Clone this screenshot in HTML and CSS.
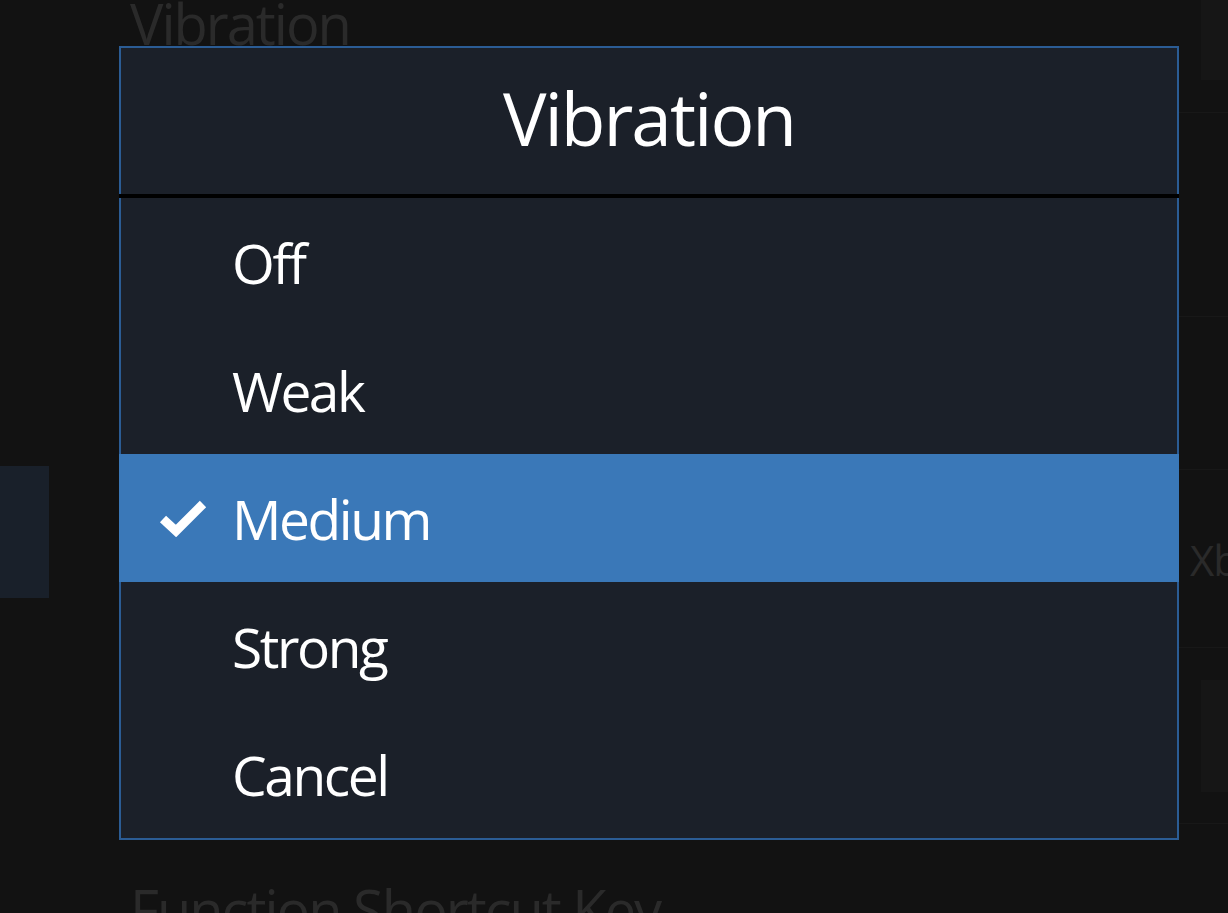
FILE: index.html
```html
<!DOCTYPE html>
<html lang="en">
<head>
<meta charset="utf-8">
<title>Vibration</title>
<link rel="stylesheet" href="styles.css">
</head>
<body>
<div class="page">
  <aside class="sidebar">
    <div class="side-item"></div>
  </aside>
  <main class="settings">
    <div class="row row-head">
      <h2 class="group-title">Vibration</h2>
      <div class="row-side"><div class="side-box side-box-top"></div></div>
    </div>
    <div class="row row-b"></div>
    <div class="row row-c"></div>
    <div class="row row-d">
      <div class="row-side row-side-text">Xbox</div>
    </div>
    <div class="row row-e">
      <div class="row-side"><div class="side-box side-box-mid"></div></div>
    </div>
    <h2 class="group-title group-title-next">Function Shortcut Key</h2>
  </main>
</div>

<div class="overlay">
  <div class="dialog" role="dialog" aria-label="Vibration">
    <div class="dialog-header">Vibration</div>
    <div class="dialog-rule"></div>
    <ul class="options">
      <li class="option"><span class="check"></span><span class="label">Off</span></li>
      <li class="option"><span class="check"></span><span class="label">Weak</span></li>
      <li class="option selected"><span class="check"><svg width="48" height="37" viewBox="0 0 48 37"><polyline points="4,19 17,31 44,4" fill="none" stroke="#ffffff" stroke-width="9" stroke-linejoin="miter" stroke-linecap="butt"/></svg></span><span class="label">Medium</span></li>
      <li class="option"><span class="check"></span><span class="label">Strong</span></li>
      <li class="option"><span class="check"></span><span class="label">Cancel</span></li>
    </ul>
  </div>
</div>
</body>
</html>
```

FILE: styles.css
```css
* { box-sizing: border-box; }

html, body {
  margin: 0;
  padding: 0;
  height: 100%;
}

body {
  background: #121212;
  font-family: "Open Sans", "Noto Sans", "DejaVu Sans", sans-serif;
  overflow: hidden;
  color: #ffffff;
}

/* ---------- dimmed background page ---------- */
.page {
  display: grid;
  grid-template-columns: 49px 1fr;
  height: 913px;
  overflow: hidden;
}

.sidebar {
  padding-top: 466px;
}

.side-item {
  height: 132px;
  background: #19202a;
}

.settings {
  display: flex;
  flex-direction: column;
  padding-left: 81px;
}

.row {
  display: flex;
  justify-content: space-between;
  border-bottom: 1px solid #181818;
}

.row-head { height: 113px; align-items: flex-start; }
.row-b { height: 204px; }
.row-c { height: 153px; }
.row-d { height: 178px; align-items: center; }
.row-e { height: 176px; align-items: center; }

.row-side {
  width: 27px;
  margin-left: auto;
}

.row-side-text {
  width: 38px;
  overflow: hidden;
  white-space: nowrap;
  font-size: 42px;
  line-height: 1;
  letter-spacing: -1px;
  color: #2a2a2a;
  padding-top: 2px;
}

.side-box {
  width: 100%;
  background: #161616;
}

.side-box-top { height: 80px; }
.side-box-mid { height: 112px; }

.group-title {
  margin: -9px 0 0 0;
  font-size: 56px;
  font-weight: 400;
  line-height: 64px;
  letter-spacing: -2px;
  color: #2a2a2a;
  white-space: nowrap;
}

.group-title-next {
  margin-top: 53px;
}

/* ---------- dialog overlay ---------- */
.overlay {
  position: fixed;
  inset: 0;
  padding: 46px 0 0 119px;
}

.dialog {
  width: 1060px;
  border: 2px solid #2b5c94;
  background: #1b2029;
}

.dialog-header {
  height: 146px;
  display: flex;
  align-items: center;
  justify-content: center;
  padding-bottom: 8px;
  font-size: 73px;
  letter-spacing: -2px;
  color: #ffffff;
}

.dialog-rule {
  height: 4px;
  margin: 0 -2px;
  background: #000000;
}

.options {
  list-style: none;
  margin: 0;
  padding: 0;
}

.option {
  height: 128px;
  display: flex;
  align-items: center;
  padding-left: 38px;
  font-size: 55px;
  letter-spacing: -2.4px;
  color: #ffffff;
}

.option.selected {
  margin: 0 -2px;
  padding-left: 40px;
  background: #3a78b8;
}

.check {
  width: 48px;
  height: 37px;
  margin-right: 25px;
  display: flex;
}

.label {
  white-space: nowrap;
}
```
